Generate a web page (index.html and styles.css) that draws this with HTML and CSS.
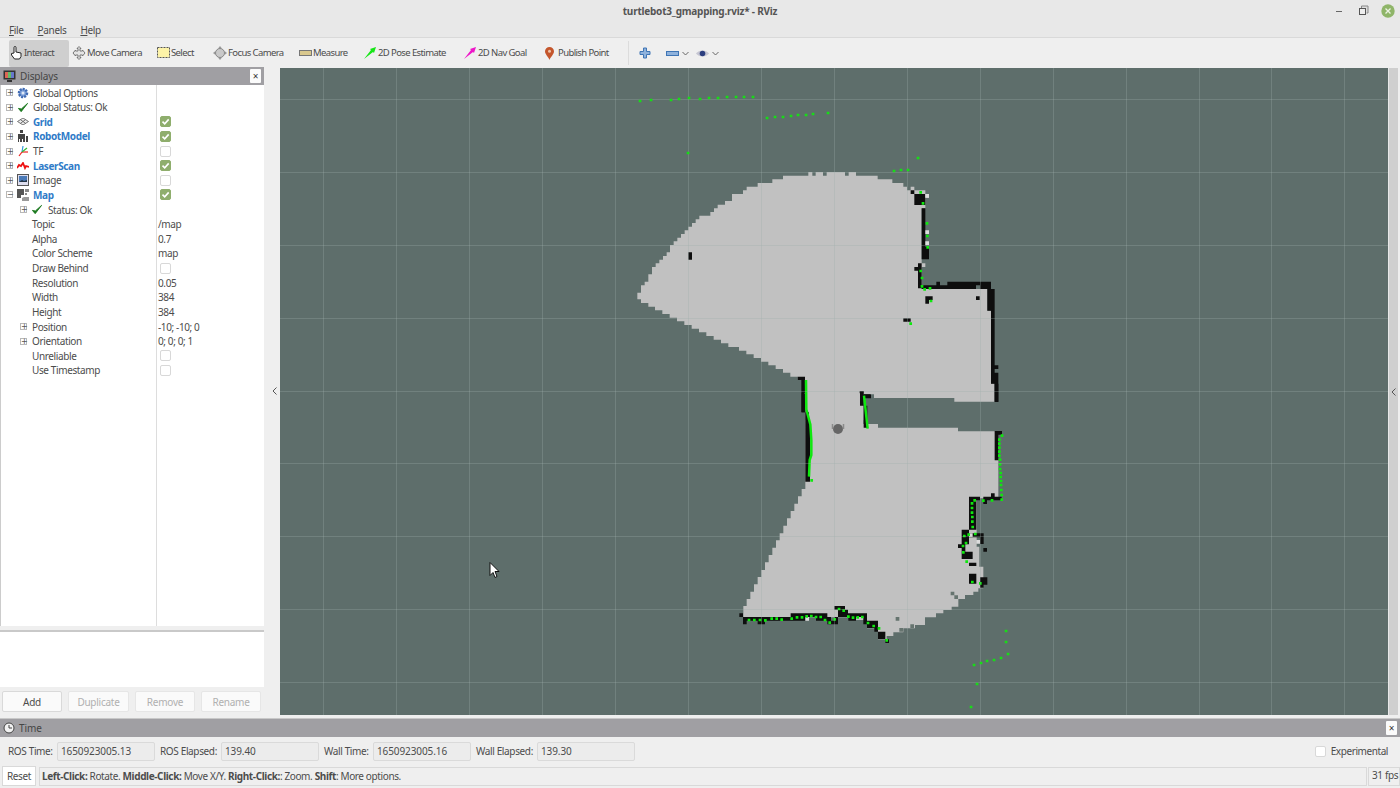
FILE: index.html
```html
<!DOCTYPE html>
<html lang="en">
<head>
<meta charset="utf-8">
<title>turtlebot3_gmapping.rviz* - RViz</title>
<link rel="stylesheet" href="styles.css">
</head>
<body>
<svg class="defs" width="0" height="0">
  <defs>
    <symbol id="check" viewBox="0 0 12 12"><path d="M1 7l3 3.5L11 1.5 4.2 7.6z" fill="#1c7a20" stroke="#1c7a20" stroke-width="1"/></symbol>
    <symbol id="tick" viewBox="0 0 11 11"><path d="M2.5 5.6l2.2 2.2 4-4.4" fill="none" stroke="#fff" stroke-width="1.6"/></symbol>
  </defs>
</svg>
<header class="chrome">
  <div class="titlebar">
    <span class="title">turtlebot3_gmapping.rviz* - RViz</span>
    <div class="winctl">
      <svg class="wc" width="12" height="12" viewBox="0 0 12 12"><path d="M1 6.5h6" stroke="#666" stroke-width="1"/></svg>
      <svg class="wc" width="12" height="12" viewBox="0 0 12 12"><path d="M3.5 3V1h6.5v7H8.500" fill="#ddd" stroke="#888"/><rect x="1.500" y="3.500" width="6" height="6" fill="#eee" stroke="#555"/></svg>
      <svg class="wclose" width="14" height="14" viewBox="0 0 14 14"><circle cx="7" cy="7" r="6.700" fill="#8fb569"/><path d="M4.500 4.500l5 5m0-5l-5 5" stroke="#edf3e4" stroke-width="1.300"/></svg>
    </div>
  </div>
  <nav class="menubar"><span><u>F</u>ile</span><span><u>P</u>anels</span><span><u>H</u>elp</span></nav>
</header>

<div class="toolbar">
  <div class="tools">
    <div class="tool active"><svg width="13" height="14" viewBox="0 0 13 14"><path d="M4 7V1.500a1 1 0 0 1 2 0V6l5 1v3.500L9.500 13h-5L1.500 9V7.500z" fill="#fff" stroke="#222" stroke-width="1"/></svg><span>Interact</span></div>
    <div class="tool"><svg width="14" height="14" viewBox="0 0 14 14"><path d="M7 .5l2 2H8V5h2.500V4l2.500 3-2.500 3V9H8v2.500h1l-2 2-2-2h1V9H3.500v1L1 7l2.500-3v1H6V2.500H5z" fill="#e4e4e4" stroke="#777"/></svg><span>Move Camera</span></div>
    <div class="tool"><svg width="13" height="12" viewBox="0 0 13 12"><rect x=".5" y=".5" width="12" height="10" fill="#fdf3a8" stroke="#555" stroke-dasharray="2 1"/></svg><span>Select</span></div>
    <div class="tool"><svg width="14" height="14" viewBox="0 0 14 14"><path d="M7 0l2 2.500H5zM7 14l2-2.500H5zM0 7l2.500-2v4zM14 7l-2.500-2v4z" fill="#999"/><circle cx="7" cy="7" r="4.500" fill="#c9c9c9" stroke="#888"/></svg><span>Focus Camera</span></div>
    <div class="tool"><svg width="13" height="6" viewBox="0 0 13 6"><rect x=".5" y=".5" width="12" height="5" fill="#d9c88e" stroke="#777"/></svg><span>Measure</span></div>
    <div class="tool"><svg width="12" height="12" viewBox="0 0 12 12"><path d="M0 12L7 3 6 2l6-2-2 6-1-1z" fill="#17e617"/></svg><span>2D Pose Estimate</span></div>
    <div class="tool"><svg width="12" height="12" viewBox="0 0 12 12"><path d="M0 12L7 3 6 2l6-2-2 6-1-1z" fill="#ee16c8"/></svg><span>2D Nav Goal</span></div>
    <div class="tool"><svg width="9" height="13" viewBox="0 0 9 13"><path d="M4.500 13C3.500 10 0 7.500 0 4.300a4.500 4.300 0 0 1 9 0C9 7.500 5.500 10 4.500 13z" fill="#c4562c"/><circle cx="4.500" cy="4.200" r="1.500" fill="#efc4a8"/></svg><span>Publish Point</span></div>
  </div>
  <div class="viewtools">
    <svg class="vt-plus" width="12" height="12" viewBox="0 0 12 12"><path d="M4.500 1h3v3.500H11v3H7.500V11h-3V7.500H1v-3h3.500z" fill="#8fb2dc" stroke="#3f75b5"/></svg>
    <span class="vt-group"><svg width="13" height="5" viewBox="0 0 13 5"><rect x=".5" y=".5" width="12" height="4" fill="#8fb2dc" stroke="#3f75b5"/></svg><svg class="chev" width="7" height="5" viewBox="0 0 7 5"><path d="M.5 1l3 3 3-3" fill="none" stroke="#666"/></svg></span>
    <span class="vt-group"><svg width="13" height="9" viewBox="0 0 13 9"><path d="M0 4.500C3 .5 10 .5 13 4.500 10 8.500 3 8.500 0 4.500z" fill="#c6c6d2"/><circle cx="6.500" cy="4.500" r="2.800" fill="#2c3f80"/></svg><svg class="chev" width="7" height="5" viewBox="0 0 7 5"><path d="M.5 1l3 3 3-3" fill="none" stroke="#666"/></svg></span>
  </div>
</div>

<main class="workspace">
  <aside class="displays">
    <div class="dock-title">
      <svg width="13" height="13" viewBox="0 0 13 13"><rect x=".5" y=".5" width="12" height="9" fill="#333"/><rect x="2" y="2" width="3" height="6" fill="#d65"/><rect x="5" y="2" width="3" height="6" fill="#6b6"/><rect x="8" y="2" width="3" height="6" fill="#67c"/><rect x="4" y="10" width="5" height="2" fill="#333"/></svg>
      <span>Displays</span>
      <span class="dock-close">×</span>
    </div>
    <div class="tree">
      <div class="row"><div class="name"><i class="exp">+</i><svg class="ic" width="12" height="12" viewBox="0 0 12 12"><circle cx="6" cy="6" r="4" fill="#7ea0d8" stroke="#3e69b3" stroke-width="2.500" stroke-dasharray="2 1"/><circle cx="6" cy="6" r="1.500" fill="#dfe8f6"/></svg><span>Global Options</span></div></div>
      <div class="row"><div class="name"><i class="exp">+</i><svg class="ic" width="11" height="11"><use href="#check"/></svg><span>Global Status: Ok</span></div></div>
      <div class="row"><div class="name"><i class="exp">+</i><svg class="ic" width="11" height="7" viewBox="0 0 11 7"><path d="M0 3.500L5.500 0 11 3.500 5.500 7zM3 1.700l5 3.600M8 1.700L3 5.300" fill="#eee" stroke="#555" stroke-width=".8"/></svg><span class="on">Grid</span></div><label class="cb checked"><svg width="11" height="11"><use href="#tick"/></svg></label></div>
      <div class="row"><div class="name"><i class="exp">+</i><svg class="ic" width="12" height="12" viewBox="0 0 12 12"><path d="M3 0h3v3H3zM1 4h7v8H6V9H5v3H3V9H2v3H1zM9 6h2v6H9z" fill="#444"/></svg><span class="on">RobotModel</span></div><label class="cb checked"><svg width="11" height="11"><use href="#tick"/></svg></label></div>
      <div class="row"><div class="name"><i class="exp">+</i><svg class="ic" width="12" height="12" viewBox="0 0 12 12"><path d="M5 7L2 11" stroke="#e22" stroke-width="1.200"/><path d="M5 7h6" stroke="#e22" stroke-width="1.200"/><path d="M5 7l1-6" stroke="#39d" stroke-width="1.200"/><path d="M5 7l5-4" stroke="#3b3" stroke-width="1.200"/></svg><span>TF</span></div><label class="cb"></label></div>
      <div class="row"><div class="name"><i class="exp">+</i><svg class="ic" width="12" height="8" viewBox="0 0 12 8"><path d="M0 6l2-3 2 1 2-3 2 5 1-2 3 1" fill="none" stroke="#e11" stroke-width="1.800"/></svg><span class="on">LaserScan</span></div><label class="cb checked"><svg width="11" height="11"><use href="#tick"/></svg></label></div>
      <div class="row"><div class="name"><i class="exp">+</i><svg class="ic" width="12" height="12" viewBox="0 0 12 12"><rect x=".5" y=".5" width="11" height="11" fill="#dde" stroke="#555"/><rect x="2" y="2" width="8" height="6" fill="#4a7ab8"/><path d="M2 8l3-2 2 1 3-1v2z" fill="#234"/></svg><span>Image</span></div><label class="cb"></label></div>
      <div class="row"><div class="name"><i class="exp">−</i><svg class="ic" width="12" height="12" viewBox="0 0 12 12"><path d="M0 0h7v6H4v3H0z" fill="#555"/><path d="M8 0h4v3H8zM8 4h2v2H8z" fill="#888"/><path d="M7 8h5v4H5V9z" fill="#999"/></svg><span class="on">Map</span></div><label class="cb checked"><svg width="11" height="11"><use href="#tick"/></svg></label></div>
      <div class="row"><div class="name child"><i class="exp">+</i><svg class="ic" width="11" height="11"><use href="#check"/></svg><span>Status: Ok</span></div></div>
      <div class="row"><div class="name prop">Topic</div><div class="val">/map</div></div>
      <div class="row"><div class="name prop">Alpha</div><div class="val">0.7</div></div>
      <div class="row"><div class="name prop">Color Scheme</div><div class="val">map</div></div>
      <div class="row"><div class="name prop">Draw Behind</div><label class="cb"></label></div>
      <div class="row"><div class="name prop">Resolution</div><div class="val">0.05</div></div>
      <div class="row"><div class="name prop">Width</div><div class="val">384</div></div>
      <div class="row"><div class="name prop">Height</div><div class="val">384</div></div>
      <div class="row"><div class="name propexp"><i class="exp">+</i><span>Position</span></div><div class="val">-10; -10; 0</div></div>
      <div class="row"><div class="name propexp"><i class="exp">+</i><span>Orientation</span></div><div class="val">0; 0; 0; 1</div></div>
      <div class="row"><div class="name prop">Unreliable</div><label class="cb"></label></div>
      <div class="row"><div class="name prop">Use Timestamp</div><label class="cb"></label></div>
    </div>
    <div class="desc"></div>
    <div class="actions">
      <button class="btn">Add</button>
      <button class="btn off wide">Duplicate</button>
      <button class="btn off">Remove</button>
      <button class="btn off">Rename</button>
    </div>
  </aside>
  <div class="split"><svg width="5" height="8" viewBox="0 0 5 8"><path d="M4.500.5L1 4l3.500 3.500" fill="none" stroke="#555"/></svg></div>
  <div class="viewport">
    <svg class="scene" viewBox="280 68 1108 647" width="1108" height="647">
      <g transform="translate(620 160) scale(.33333)">
        <path class="free" d="M52 398H63V376H74V365H85V343H96V321H107V310H118V299H129V288H140V277H150V255H161V244H172V233H183V222H194V211H205V200H216V189H227V178H238V167H271V156H282V145H293V134H315V123H336V102H369V91H380V80H413V69H457V58H489V47H565V36H577V47H587V36H609V47H620V36H675V47H686V36H708V47H773V58H817V69H850V80H861V91H872V80H883V91H894V91H916V102H927V113H916V145H905V310H916V321H905V387H1102V452H1113V670H1124V725H1003V714H762V703H730V780H555V660H533V650H511V638H489V627H467V616H445V605H423V594H401V583H379V572H357V561H325V550H303V539H281V528H259V517H237V506H215V495H193V484H171V473H149V462H127V451H105V440H85V429H63V418H52Z"/>
        <path class="wall" d="M205 277h11v22h-11zM872 91h11v11h-11zM883 102h33v33h-33zM905 145h11v115h-11zM905 260h22v38h-22zM894 310h11v75h-11zM883 321h11v11h-11zM905 376h55v11h-55zM949 365h11v11h-11zM960 376h22v11h-22zM982 365h86v22h-86zM1068 365h12v11h-12zM1080 365h33v22h-33zM1102 387h22v65h-22zM1113 398h11v240h-11zM1124 616h11v11h-11zM1113 638h22v32h-22zM1124 670h11v55h-11zM916 409h22v11h-22zM916 420h11v11h-11zM1068 409h11v11h-11zM850 475h22v10h-22zM533 650h22v10h-22zM544 660h11v97h-11zM555 745h11v35h-11zM719 693h11v44h-11zM730 703h22v10h-22z"/>
        <path class="pale" d="M916 102h11v11h-11zM916 211h11v11h-11zM916 244h11v11h-11z"/>
        <path class="dots" d="M902 97h.1M909 130h.1M921 190h.1M922 228h.1M923 262h.1M902 333h.1M906 354h.1M906 379h.1M914 388h.1M930 385h.1M933 423h.1M872 491h.1"/>
      </g>
      <g transform="translate(730 380) scale(.33333)">
        <path class="free" d="M222 40H400V132H444V143H684V154H800V240H805V355H740V500H748V560H760V625H745V635H730V645H705V657H685V680H665V690H640V700H618V712H585V735H555V745H520V757H490V768H470V778H444V745H411V720H378V712H40V678H50V657H61V635H72V613H83V591H94V570H105V547H116V525H127V503H138V481H149V460H160V437H171V415H182V393H193V371H204V349H215V327H226V90H222Z"/>
        <path class="wall" d="M215 40h11v57h-11zM226 97h11v33h-11zM226 130h14v175h-14zM390 33h11v44h-11zM401 44h22v11h-22zM401 77h11v66h-11zM783 0h20v11h-20zM794 11h11v55h-11zM794 153h22v11h-22zM794 164h11v77h-11zM783 340h11v11h-11zM760 350h55v11h-55zM760 361h11v11h-11zM717 350h33v11h-33zM717 361h22v88h-22zM695 449h22v44h-22zM695 460h66v12h-66zM750 472h11v20h-11zM684 493h11v11h-11zM695 482h11v55h-11zM706 515h22v22h-22zM717 548h22v10h-22zM717 581h22v30h-22zM750 592h22v22h-22zM750 614h11v9h-11zM760 504h11v11h-11zM28 700h11v11h-11zM39 711h11v22h-11zM50 711h132v11h-132zM83 722h22v11h-22zM182 700h44v22h-44zM226 700h66v11h-66zM258 711h45v11h-45zM292 711h11v22h-11zM303 722h20v11h-20zM314 711h10v22h-10zM313 678h32v11h-32zM324 689h30v22h-30zM354 700h57v11h-57zM355 711h23v11h-23zM400 711h11v22h-11zM411 722h33v22h-33zM433 744h11v11h-11zM444 755h22v22h-22zM466 778h11v11h-11z"/>
        <path class="floor" d="M662 635h11v11h-11zM673 646h11v11h-11zM497 711h11v11h-11zM508 744h11v11h-11zM541 733h11v11h-11z"/>
        <path class="pale" d="M226 711h11v11h-11zM739 480h11v11h-11zM717 460h11v11h-11z"/>
        <path class="beam" d="M228 0L229 88 241 133 244 180 244 225 239 240 237 290M402 47L413 146"/>
        <path class="dots" d="M245 301h.1M816 167h.1M808 179h.1M808 191h.1M808 203h.1M808 215h.1M808 227h.1M810 239h.1M810 253h.1M810 267h.1M812 279h.1M812 291h.1M813 303h.1M813 315h.1M814 330h.1M815 345h.1M815 359h.1M786 361h.1M760 362h.1M734 361h.1M726 370h.1M726 384h.1M726 398h.1M727 411h.1M727 425h.1M728 441h.1M736 462h.1M716 464h.1M703 468h.1M708 489h.1M699 498h.1M700 517h.1M710 545h.1M727 606h.1M751 610h.1M57 720h.1M73 720h.1M90 720h.1M106 721h.1M125 716h.1M140 716h.1M155 719h.1M185 716h.1M201 712h.1M216 712h.1M230 709h.1M244 708h.1M258 711h.1M272 711h.1M285 720h.1M299 728h.1M314 718h.1M327 687h.1M341 692h.1M355 710h.1M369 713h.1M383 712h.1M397 711h.1M414 729h.1M431 738h.1M447 745h.1M470 781h.1"/>
      </g>
      <path class="grid" d="M323.500 68V715M396.500 68V715M469.500 68V715M542.500 68V715M615.500 68V715M688.500 68V715M761.500 68V715M834.500 68V715M907.500 68V715M980.500 68V715M1053.500 68V715M1126.500 68V715M1199.500 68V715M1271.500 68V715M1344.500 68V715M280 99.500H1388M280 172.500H1388M280 245.500H1388M280 318.500H1388M280 391.500H1388M280 463.500H1388M280 536.500H1388M280 609.500H1388M280 682.500H1388"/>
      <path class="sdots" d="M640 101h.1M651 100h.1M671 100h.1M679 99h.1M689 98h.1M700 99h.1M709 98h.1M718 98h.1M727 97h.1M736 97h.1M744 97h.1M753 97h.1M767 118h.1M775 117h.1M783 117h.1M791 116h.1M798 115h.1M806 115h.1M813 114h.1M828 113h.1M688 153h.1M918 158h.1M894 171h.1M901 170h.1M908 170h.1M1006 631h.1M1006 642h.1M1008 654h.1M1001 658h.1M994 660h.1M987 661h.1M981 663h.1M974 665h.1M977 684h.1M971 707h.1"/>
      <g class="robot"><circle cx="838" cy="429" r="5"/><path d="M832.500 424v5M843.500 424v5"/></g>
      <path class="cursor" d="M490 562.500v13l3-3 2 5 2-1-2-5h4z"/>
    </svg>
  </div>
  <div class="rstrip"><svg width="5" height="8" viewBox="0 0 5 8"><path d="M4.500.5L1 4l3.500 3.500" fill="none" stroke="#555"/></svg></div>
</main>

<section class="timepanel">
  <div class="dock-title">
    <svg width="12" height="12" viewBox="0 0 12 12"><circle cx="6" cy="6" r="5" fill="#f2f2f2" stroke="#444"/><path d="M6 3v3h3" fill="none" stroke="#444"/></svg>
    <span>Time</span>
    <span class="dock-close">×</span>
  </div>
  <div class="timebar">
    <label class="tlabel">ROS Time:</label><div class="tfield">1650923005.13</div>
    <label class="tlabel">ROS Elapsed:</label><div class="tfield">139.40</div>
    <label class="tlabel">Wall Time:</label><div class="tfield">1650923005.16</div>
    <label class="tlabel">Wall Elapsed:</label><div class="tfield">139.30</div>
    <div class="exper"><label class="cb"></label><span>Experimental</span></div>
  </div>
</section>

<footer class="statusbar">
  <button class="reset">Reset</button>
  <div class="msg"><b>Left-Click:</b> Rotate. <b>Middle-Click:</b> Move X/Y. <b>Right-Click:</b>: Zoom. <b>Shift</b>: More options.</div>
  <div class="fps">31 fps</div>
</footer>
</body>
</html>
```
FILE: styles.css
```css
* { box-sizing: border-box; }
html, body { margin: 0; height: 100%; }
body {
  width: 1400px; height: 788px; overflow: hidden;
  display: flex; flex-direction: column;
  background: #efefef; color: #4c4c4c;
  font: 10px/14px "Noto Sans", sans-serif;
  letter-spacing: -.12px;
}
.defs { position: absolute; }
.chrome { height: 38px; background: #e8e8e8; border-bottom: 1px solid #d9d9d9; flex: none; }
.titlebar { height: 22px; display: flex; align-items: center; justify-content: center; position: relative; }
.title { font-weight: 700; font-size: 10px; letter-spacing: -.22px; color: #555; }
.winctl { position: absolute; right: 5px; top: 4px; display: flex; align-items: center; gap: 11px; }
.menubar { display: flex; gap: 14px; padding: 1px 0 0 9px; letter-spacing: -.35px; }
.toolbar { height: 29px; flex: none; display: flex; align-items: center; background: #efefef; padding: 1px 0 0 9px; font-size: 9.5px; letter-spacing: -.6px; }
.tools { display: grid; grid-template-columns: 60px 85px 56px 86px 65px 100px 81px 83px; height: 27px; }
.tool { display: flex; align-items: center; justify-content: flex-start; gap: 1px; padding-left: 3px; white-space: nowrap; }
.tool:nth-child(1) { padding-left: 1px; background: #cfcfcf; border-radius: 2px; }
.tool:nth-child(n+6) { gap: 2px; }
.tool:nth-child(8) { gap: 4px; }
.viewtools { margin-left: 3px; padding-left: 10px; border-left: 1px solid #dcdcdc; height: 24px; display: flex; align-items: center; gap: 7px; }
.vt-plus { margin-right: 8px; }
.vt-group { display: flex; align-items: center; gap: 3px; }
.workspace { flex: 1; display: flex; min-height: 0; padding-bottom: 3px; background: #efefef; }
.displays { width: 264px; display: flex; flex-direction: column; }
.dock-title { height: 18px; flex: none; display: flex; align-items: center; gap: 4px; padding-left: 3px; background: #a09fa3; color: #454545; position: relative; }
.dock-close { position: absolute; right: 3px; top: 2px; width: 11px; height: 14px; background: #fbfbfb; font-size: 10px; line-height: 14px; text-align: center; color: #333; border-radius: 1px; }
.tree { height: 541px; flex: none; background: #fff linear-gradient(#ddd, #ddd) 155px 0 / 1px 100% no-repeat; padding-top: .25px; padding-left: 1px; border-left: 1px solid #ccc; letter-spacing: -.38px; }
.row { height: 14.625px; display: flex; align-items: center; position: relative; white-space: nowrap; }
.name { width: 154px; flex: none; display: flex; align-items: center; padding-left: 4px; }
.exp { width: 7px; height: 7px; border: 1px solid #b8b8b8; font: 8px/5px "DejaVu Sans", sans-serif; letter-spacing: 0; text-align: center; color: #555; flex: none; margin-right: 4px; }
.ic { margin-right: 4px; flex: none; width: 12px; }
.on { color: #2f7bc8; font-weight: 700; }
.child { padding-left: 18px; }
.child .ic { margin-right: 5px; }
.prop { padding-left: 30px; }
.propexp { padding-left: 18px; }
.propexp .exp { margin-right: 5px; }
.val { padding-left: 2px; }
.cb { width: 11px; height: 11px; flex: none; margin-left: 4px; border: 1px solid #d8d8d8; border-radius: 2px; background: #fff; display: block; }
.cb.checked { background: #8fae6d; border-color: #8fae6d; }
.cb svg { display: block; margin: -1px; }
.desc { height: 57px; margin-top: 4px; background: #fff; border-top: 2px solid #c9c9c9; flex: none; }
.actions { display: flex; gap: 6px; padding: 4px 2px 0; }
.btn { width: 60px; height: 21px; padding: 0; background: #fafafa; border: 1px solid #d9d9d9; border-radius: 2px; font: inherit; letter-spacing: -.25px; color: #4c4c4c; }
.btn.wide { width: 61px; }
.btn.off { color: #b0b0b0; border-color: #e6e6e6; }
.split { width: 16px; display: flex; align-items: center; justify-content: center; padding-left: 4px; }
.viewport { width: 1108px; margin-top: 1px; background: #5e6e6b; }
.rstrip { flex: 1; margin-top: 1px; background: #cfcfcf; border-left: 1px solid #e8e8e8; border-right: 2px solid #efefef; display: flex; align-items: center; justify-content: center; }
.scene { display: block; }
.free { fill: #c1c1c1; }
.wall { fill: #0e0e0e; }
.pale { fill: #dcdcdc; }
.floor { fill: #66746f; }
.grid { fill: none; stroke: rgb(160, 175, 172); stroke-opacity: .3; stroke-width: 1; }
.beam { fill: none; stroke: #0fe80f; stroke-width: 7.500; }
.dots { fill: none; stroke: #0fe80f; stroke-width: 8; stroke-linecap: square; }
.sdots { fill: none; stroke: #18dc18; stroke-width: 2.600; stroke-linecap: square; }
.robot circle { fill: #666; }
.robot path { stroke: #8a8a8a; stroke-width: 1.500; fill: none; }
.cursor { fill: #fff; stroke: #111; stroke-width: 1; }
.timepanel { flex: none; border-top: 1px solid #c8c8c8; }
.timebar { height: 28px; display: flex; align-items: center; padding-left: 8px; letter-spacing: -.1px; }
.tlabel { width: 49px; flex: none; white-space: nowrap; letter-spacing: -.36px; }
.tlabel:nth-of-type(2), .tlabel:nth-of-type(4) { width: 61px; }
.tfield { width: 98px; height: 19px; flex: none; margin-right: 5px; padding-left: 3px; line-height: 17px; background: #ececec; border: 1px solid #dadada; border-radius: 2px; }
.exper { margin-left: auto; margin-right: 12px; display: flex; align-items: center; gap: 5px; letter-spacing: -.42px; }
.statusbar { height: 23px; flex: none; display: flex; align-items: center; padding: 0 0 1px 2px; letter-spacing: -.38px; }
.reset { width: 34px; height: 20px; padding: 0; margin-right: 3px; font: inherit; letter-spacing: inherit; color: #4c4c4c; background: #fff; border: 1px solid #d9d9d9; }
.msg { width: 1328px; height: 19px; padding-left: 2px; line-height: 17px; border: 1px solid #d9d9d9; }
.msg b { font-weight: 700; }
.fps { flex: 1; height: 19px; margin-left: 1px; padding-left: 3px; line-height: 15px; border: 1px solid #d9d9d9; white-space: nowrap; overflow: hidden; }
```
